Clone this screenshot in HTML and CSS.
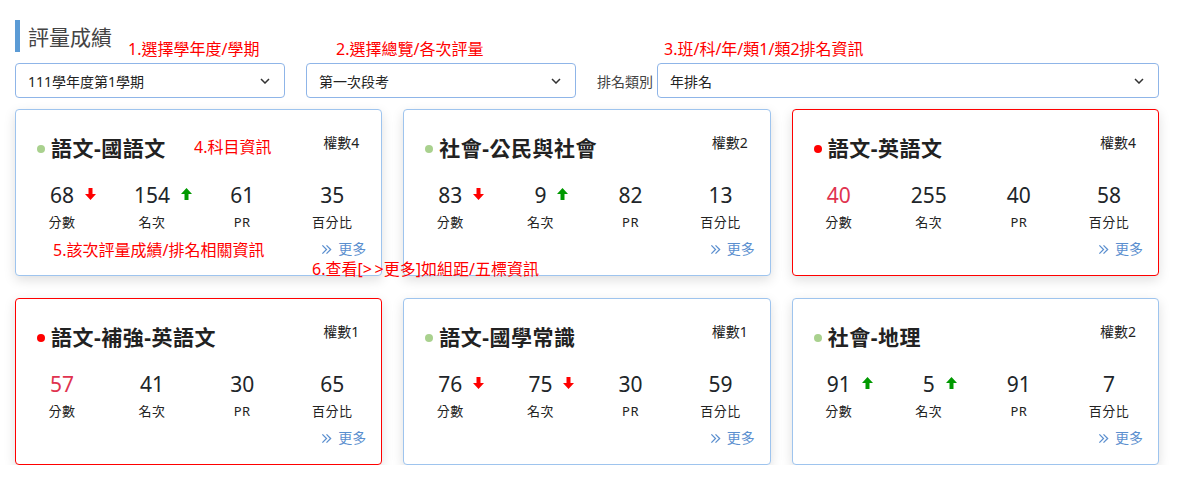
FILE: index.html
```html
<!DOCTYPE html>
<html lang="zh-Hant">

<head>
    <meta charset="UTF-8">
    <meta name="viewport" content="width=device-width, initial-scale=1.0">
    <title>評量成績</title>
    <link rel="stylesheet" href="styles.css">
</head>

<body>
    <div class="page">
        <h2 class="page-title">評量成績</h2>

        <div class="filters">
            <div class="select-box">
                <span>111學年度第1學期</span>
                <svg class="chevron" viewBox="0 0 10 6"><polyline points="1,1 5,5 9,1" /></svg>
            </div>
            <div class="select-box">
                <span>第一次段考</span>
                <svg class="chevron" viewBox="0 0 10 6"><polyline points="1,1 5,5 9,1" /></svg>
            </div>
            <div class="rank-filter">
                <label>排名類別</label>
                <div class="select-box">
                    <span>年排名</span>
                    <svg class="chevron" viewBox="0 0 10 6"><polyline points="1,1 5,5 9,1" /></svg>
                </div>
            </div>
        </div>

        <div class="cards" id="cards"></div>

        <!-- annotations -->
        <div class="note" style="left:128px;top:39px">1.選擇學年度/學期</div>
        <div class="note" style="left:336px;top:39px">2.選擇總覽/各次評量</div>
        <div class="note" style="left:664px;top:39px">3.班/科/年/類1/類2排名資訊</div>
        <div class="note" style="left:194px;top:137px">4.科目資訊</div>
        <div class="note" style="left:53px;top:240px">5.該次評量成績/排名相關資訊</div>
        <div class="note" style="left:312px;top:259px">6.查看[&gt;&thinsp;&gt;更多]如組距/五標資訊</div>
    </div>

    <script>
        const subjects = [
            { name: '語文-國語文', weight: 4, warn: false, score: 68, scoreDir: 'down', rank: 154, rankDir: 'up', pr: 61, pct: 35 },
            { name: '社會-公民與社會', weight: 2, warn: false, score: 83, scoreDir: 'down', rank: 9, rankDir: 'up', pr: 82, pct: 13 },
            { name: '語文-英語文', weight: 4, warn: true, score: 40, rank: 255, pr: 40, pct: 58 },
            { name: '語文-補強-英語文', weight: 1, warn: true, score: 57, rank: 41, pr: 30, pct: 65 },
            { name: '語文-國學常識', weight: 1, warn: false, score: 76, scoreDir: 'down', rank: 75, rankDir: 'down', pr: 30, pct: 59 },
            { name: '社會-地理', weight: 2, warn: false, score: 91, scoreDir: 'up', rank: 5, rankDir: 'up', pr: 91, pct: 7 }
        ];

        function arrow(dir) {
            if (!dir) return '';
            const d = dir === 'down'
                ? 'M3.5 0h4v6h3.5l-5.5 6l-5.5-6h3.5z'
                : 'M3.5 12h4v-6h3.5l-5.5-6l-5.5 6h3.5z';
            return `<svg class="arrow ${dir}" viewBox="0 0 11 12"><path d="${d}" /></svg>`;
        }

        const cards = document.getElementById('cards');
        subjects.forEach(s => {
            const card = document.createElement('div');
            card.className = 'card' + (s.warn ? ' warn' : '');
            card.innerHTML = `
                <div class="card-head">
                    <div class="card-title"><span class="dot"></span>${s.name}</div>
                    <div class="weight">權數${s.weight}</div>
                </div>
                <div class="stats">
                    <div class="stat">
                        <div class="num ${s.warn ? 'fail' : ''}"><span>${s.score}${arrow(s.scoreDir)}</span></div>
                        <div class="label">分數</div>
                    </div>
                    <div class="stat">
                        <div class="num"><span>${s.rank}${arrow(s.rankDir)}</span></div>
                        <div class="label">名次</div>
                    </div>
                    <div class="stat">
                        <div class="num"><span>${s.pr}</span></div>
                        <div class="label">PR</div>
                    </div>
                    <div class="stat">
                        <div class="num"><span>${s.pct}</span></div>
                        <div class="label">百分比</div>
                    </div>
                </div>
                <div class="more">
                    <a href="#"><svg class="more-icon" viewBox="0 0 12 12"><polyline points="1.5,1.5 6,6 1.5,10.5" /><polyline points="6,1.5 10.5,6 6,10.5" /></svg>更多</a>
                </div>
            `;
            cards.appendChild(card);
        });
    </script>
</body>

</html>
```

FILE: styles.css
```css
* {
    margin: 0;
    padding: 0;
    box-sizing: border-box;
}

body {
    font-family: "Noto Sans", "Noto Sans CJK TC", sans-serif;
    background-color: #ffffff;
    color: #212529;
}

.page {
    position: relative;
    width: 1174px;
    padding: 20px 15px 0 15px;
}

.page-title {
    border-left: 5px solid #5b9bd5;
    padding-left: 8px;
    height: 32px;
    font-size: 21px;
    line-height: 34px;
    font-weight: normal;
    color: #444;
}

.filters {
    display: grid;
    grid-template-columns: 270px 270px 1fr;
    gap: 21px;
    margin-top: 11px;
}

.select-box {
    display: flex;
    align-items: center;
    justify-content: space-between;
    height: 35px;
    padding: 0 14px 0 12px;
    border: 1px solid #8fb5e8;
    border-radius: 4px;
    font-size: 14px;
    color: #222;
}

.chevron {
    width: 10px;
    height: 6px;
    fill: none;
    stroke: #333;
    stroke-width: 1.5;
}

.rank-filter {
    display: flex;
    align-items: center;
    gap: 4px;
}

.rank-filter label {
    font-size: 14px;
    color: #444;
    white-space: nowrap;
}

.rank-filter .select-box {
    flex: 1;
}

.cards {
    display: grid;
    grid-template-columns: repeat(3, 1fr);
    column-gap: 21px;
    row-gap: 22px;
    margin-top: 11px;
}

.card {
    border: 1px solid #9ec4ee;
    border-radius: 4px;
    padding: 23px 22px 17px 21px;
    box-shadow: 0 4px 12px rgba(0, 0, 0, 0.13);
    background-color: #fff;
}

.card.warn {
    border-color: #ff0000;
}

.card-head {
    display: flex;
    justify-content: space-between;
    align-items: flex-start;
}

.card-title {
    display: flex;
    align-items: center;
    font-size: 21px;
    line-height: 30px;
    font-weight: bold;
    letter-spacing: 0.5px;
    color: #222;
}

.dot {
    width: 8px;
    height: 8px;
    border-radius: 50%;
    background-color: #a9d18e;
    margin-right: 6px;
    margin-top: 2px;
}

.warn .dot {
    background-color: #ff0000;
}

.weight {
    font-size: 14px;
    line-height: 20px;
    margin-top: 0;
    color: #222;
}

.stats {
    display: grid;
    grid-template-columns: repeat(4, 1fr);
    margin: 19px -18px 0 -20px;
    text-align: center;
}

.num {
    font-size: 21px;
    line-height: 26px;
    color: #212529;
}

.num span {
    position: relative;
}

.num.fail {
    color: #e0334f;
}

.arrow {
    position: absolute;
    left: calc(100% + 11px);
    top: 7px;
    width: 11px;
    height: 12px;
}

.arrow.down {
    fill: #ff0000;
}

.arrow.up {
    fill: #009900;
}

.label {
    font-size: 13px;
    line-height: 18px;
    margin-top: 5px;
    letter-spacing: 0.5px;
    color: #222;
}

.more {
    text-align: right;
    margin: 9px -7px 0 0;
    font-size: 14px;
    line-height: 18px;
}

.more a {
    color: #5b8fcf;
    text-decoration: none;
}

.more-icon {
    width: 11px;
    height: 11px;
    margin-right: 6px;
    vertical-align: -1px;
    fill: none;
    stroke: #5b8fcf;
    stroke-width: 1.4;
}

.note {
    position: absolute;
    font-size: 16px;
    line-height: 20px;
    color: #ff0000;
    white-space: nowrap;
}
```
